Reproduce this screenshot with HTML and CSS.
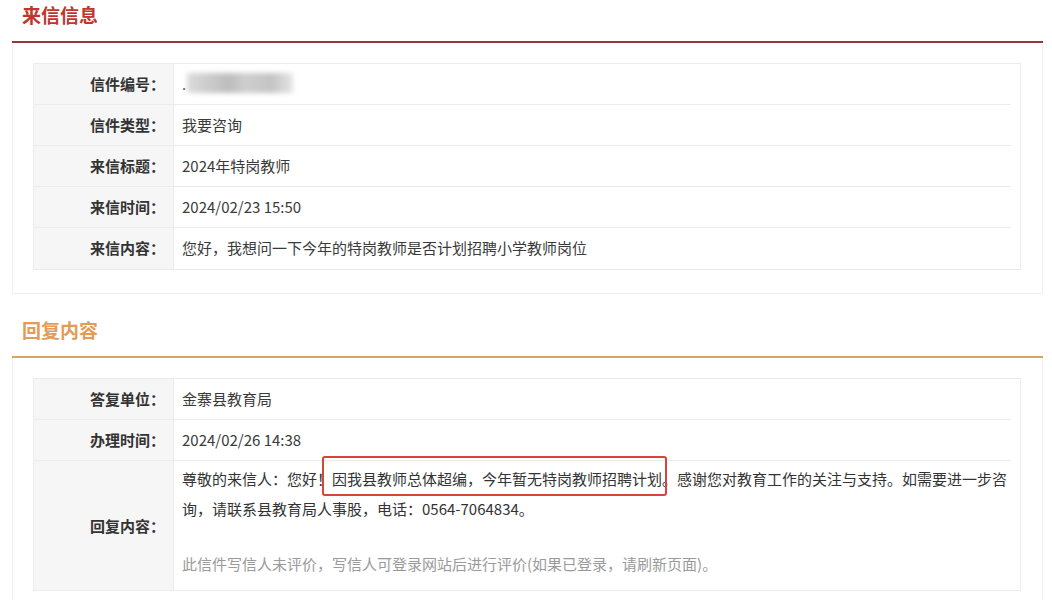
FILE: index.html
```html
<!DOCTYPE html>
<html lang="zh-CN">
<head>
<meta charset="utf-8">
<title>来信信息</title>
<link rel="stylesheet" href="styles.css">
</head>
<body>
<div class="page">
  <section class="section">
    <h2 class="section-title title-red">来信信息</h2>
    <div class="panel">
      <div class="info-table">
        <div class="label">信件编号：</div>
        <div class="value"><span class="dot">.</span><span class="blurred"></span></div>
        <div class="label">信件类型：</div>
        <div class="value">我要咨询</div>
        <div class="label">来信标题：</div>
        <div class="value">2024年特岗教师</div>
        <div class="label">来信时间：</div>
        <div class="value">2024/02/23 15:50</div>
        <div class="label last">来信内容：</div>
        <div class="value last">您好，我想问一下今年的特岗教师是否计划招聘小学教师岗位</div>
      </div>
    </div>
  </section>

  <section class="section section-reply">
    <h2 class="section-title title-orange">回复内容</h2>
    <div class="panel panel-open">
      <div class="info-table">
        <div class="label">答复单位：</div>
        <div class="value">金寨县教育局</div>
        <div class="label">办理时间：</div>
        <div class="value">2024/02/26 14:38</div>
        <div class="label label-tall last">回复内容：</div>
        <div class="value value-tall last">
          <p class="reply-text">尊敬的来信人：您好！<span class="highlight">因我县教师总体超编，今年暂无特岗教师招聘计划。</span>感谢您对教育工作的关注与支持。如需要进一步咨询，请联系县教育局人事股，电话：0564-7064834。</p>
          <p class="reply-note">此信件写信人未评价，写信人可登录网站后进行评价(如果已登录，请刷新页面)。</p>
        </div>
      </div>
    </div>
  </section>
</div>
</body>
</html>
```

FILE: styles.css
```css
* {
  box-sizing: border-box;
}

html, body {
  margin: 0;
  padding: 0;
  background: #ffffff;
}

body {
  font-family: "Noto Sans CJK SC", "Noto Sans", "Liberation Sans", sans-serif;
  color: #333333;
  overflow: hidden;
}

.page {
  padding: 0 9px 0 12px;
}

.section-title {
  margin: 0;
  height: 43px;
  padding-left: 10px;
  font-size: 19px;
  line-height: 30px;
  font-weight: 700;
  border-bottom: 2px solid #8f3a34;
}

.title-red {
  color: #c0352c;
}

.title-orange {
  color: #e39b55;
  border-bottom-color: #d3a55f;
}

.section-reply {
  margin-top: 21px;
}

.panel {
  border: 1px solid #efefef;
  border-top: none;
  padding: 20px 21px 23px 20px;
}

.panel-open {
  padding-bottom: 30px;
}

.info-table {
  display: grid;
  grid-template-columns: 140px 1fr;
  border: 1px solid #ececec;
}

.label {
  background: #f6f6f6;
  text-align: right;
  padding-right: 8px;
  font-size: 15px;
  font-weight: 700;
  color: #333333;
  height: 41px;
  line-height: 40px;
  border-bottom: 1px solid #ececec;
  border-right: 1px solid #ececec;
}

.value {
  font-size: 15px;
  color: #3a3a3a;
  height: 41px;
  line-height: 40px;
  padding-left: 8px;
  margin-right: 9px;
  border-bottom: 1px solid #ececec;
}

.label.last,
.value.last {
  border-bottom: none;
}

.dot {
  color: #555;
}

.blurred {
  display: inline-block;
  vertical-align: middle;
  width: 106px;
  height: 20px;
  margin-left: 1px;
  margin-top: -6px;
  background: linear-gradient(90deg, #dcdcdc 0%, #cdcdcd 18%, #bdbdbd 40%, #cecece 55%, #c4c4c4 80%, #e6e6e6 100%);
  filter: blur(2.5px);
}

.label-tall {
  height: 129px;
  line-height: 129px;
}

.value-tall {
  height: 129px;
  line-height: 30px;
  padding-top: 3px;
}

.reply-text {
  margin: 0;
  color: #333333;
}

.reply-note {
  margin: 25px 0 0;
  color: #9a9a9a;
}

.highlight {
  position: relative;
}

.highlight::after {
  content: "";
  position: absolute;
  left: -10px;
  right: 10px;
  top: -12px;
  bottom: -7px;
  border: 2px solid #d8433b;
  border-radius: 3px;
  pointer-events: none;
}
```
